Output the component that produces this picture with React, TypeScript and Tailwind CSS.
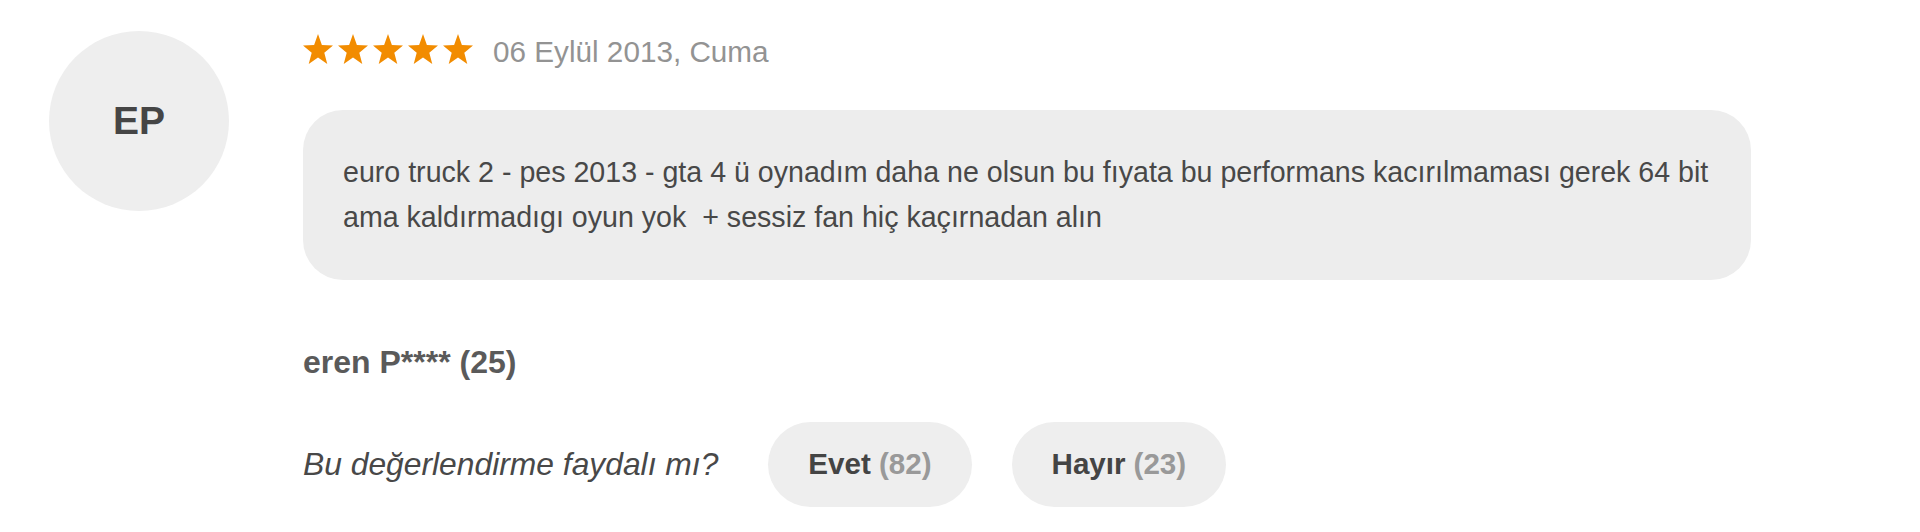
import React from 'react';

const Star = () => (
  <svg viewBox="0 0 30 28.53" preserveAspectRatio="none" className="w-[30px] h-[30px]">
    <polygon
      fill="#f28c00"
      points="15,0 18.89,10.41 30,10.9 21.3,17.82 24.27,28.53 15,22.39 5.73,28.53 8.7,17.82 0,10.9 11.11,10.41"
    />
  </svg>
);

const VoteButton = ({ label, count }: { label: string; count: number }) => (
  <button className="h-[85px] px-[40px] rounded-full bg-[#eeeeee] flex items-center text-[29.6px] font-bold text-[#444444] whitespace-nowrap">
    {label}
    <span className="ml-[8px] text-[#999999]">({count})</span>
  </button>
);

export default function App() {
  return (
    <div className="w-full h-[532px] bg-white pl-[49px] pt-[31px] flex gap-[74px] font-['Liberation_Sans',Arial,sans-serif]">
      {/* avatar */}
      <div className="w-[180px] h-[180px] shrink-0 rounded-full bg-[#eeeeee] flex items-center justify-center text-[39px] font-bold text-[#454545]">
        EP
      </div>

      <div className="w-[1448px] pt-[3px]">
        <div className="flex items-start gap-[20px]">
          <div className="flex gap-[5px] h-[30px]">
            <Star />
            <Star />
            <Star />
            <Star />
            <Star />
          </div>
          <span className="text-[29.7px] leading-[36px] text-[#939393]">06 Eylül 2013, Cuma</span>
        </div>

        <div className="mt-[40px] rounded-[40px] bg-[#ededed] p-[40px] text-[28.6px] leading-[45px] text-[#484848]">
          <p>euro truck 2 - pes 2013 - gta 4 ü oynadım daha ne olsun bu fıyata bu performans kacırılmaması gerek 64 bit</p>
          <p>ama kaldırmadıgı oyun yok{'\u00a0'} + sessiz fan hiç kaçırnadan alın</p>
        </div>

        <div className="mt-[62px] text-[32px] leading-[40px] font-bold text-[#5a5a5a]">eren P**** (25)</div>

        <div className="mt-[40px] flex items-center">
          <p className="italic text-[31.8px] text-[#484848] whitespace-nowrap">Bu değerlendirme faydalı mı?</p>
          <div className="ml-[50px] flex gap-[40px]">
            <VoteButton label="Evet" count={82} />
            <VoteButton label="Hayır" count={23} />
          </div>
        </div>
      </div>
    </div>
  );
}
